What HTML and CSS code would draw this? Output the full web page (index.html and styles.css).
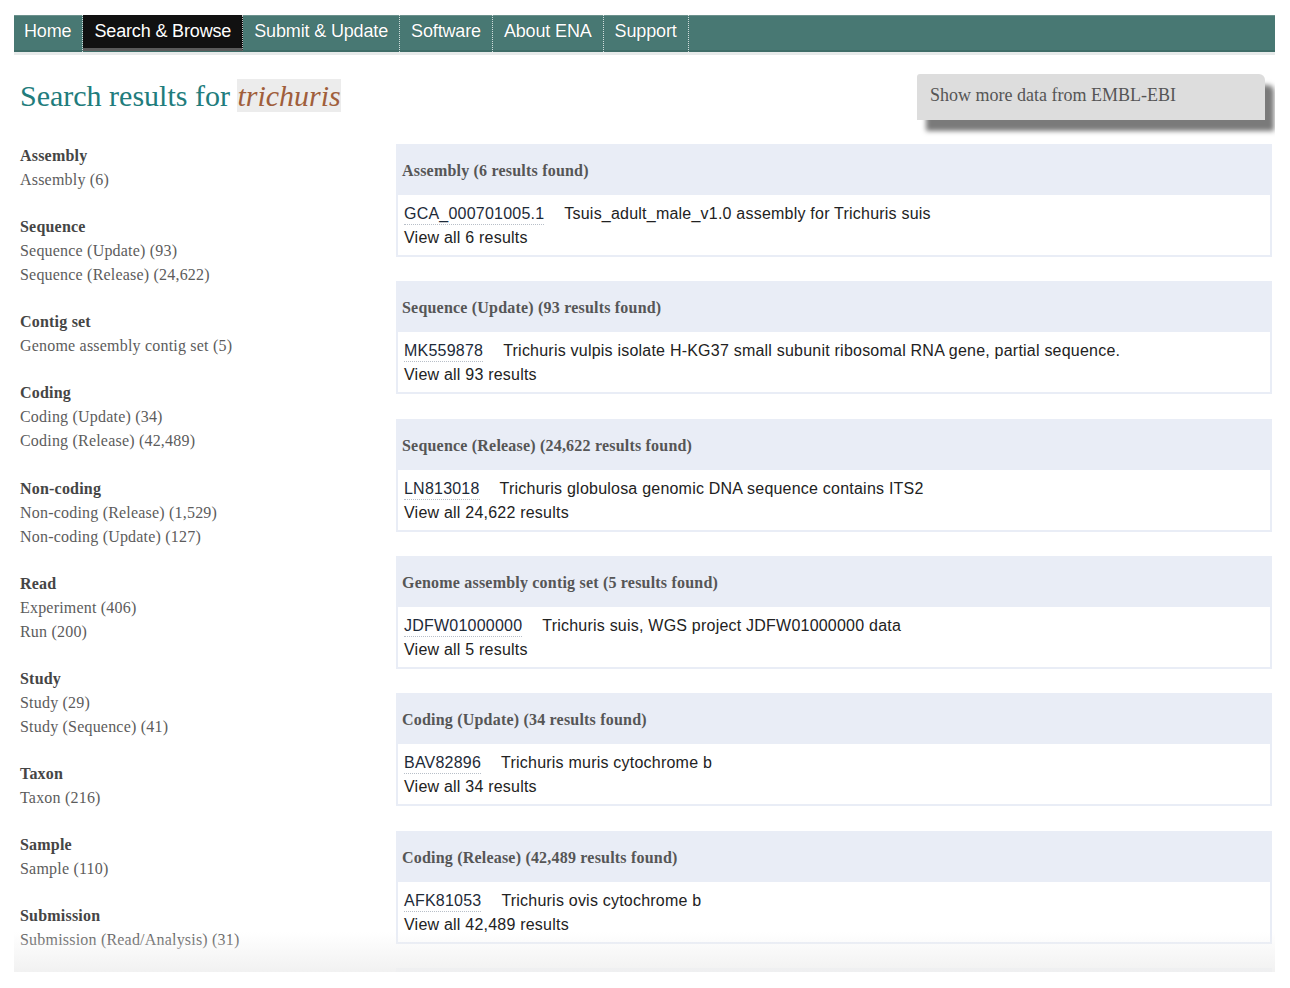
FILE: index.html
```html
<!DOCTYPE html>
<html lang="en">
<head>
<meta charset="utf-8">
<title>ENA - Search results for trichuris</title>
<link rel="stylesheet" href="styles.css">
</head>
<body>
<div class="page">
  <nav class="nav">
    <a class="nav-item first">Home</a>
    <a class="nav-item active">Search &amp; Browse</a>
    <a class="nav-item">Submit &amp; Update</a>
    <a class="nav-item">Software</a>
    <a class="nav-item">About ENA</a>
    <a class="nav-item">Support</a>
  </nav>

  <div class="head">
    <h1 class="title">Search results for <span class="term">trichuris</span></h1>
    <div class="more-btn">Show more data from EMBL-EBI</div>
  </div>

  <div class="content">
    <aside class="sidebar">
      <div class="group">
        <div class="group-title">Assembly</div>
        <div class="group-item">Assembly (6)</div>
      </div>
      <div class="group">
        <div class="group-title">Sequence</div>
        <div class="group-item">Sequence (Update) (93)</div>
        <div class="group-item">Sequence (Release) (24,622)</div>
      </div>
      <div class="group">
        <div class="group-title">Contig set</div>
        <div class="group-item">Genome assembly contig set (5)</div>
      </div>
      <div class="group">
        <div class="group-title">Coding</div>
        <div class="group-item">Coding (Update) (34)</div>
        <div class="group-item">Coding (Release) (42,489)</div>
      </div>
      <div class="group">
        <div class="group-title">Non-coding</div>
        <div class="group-item">Non-coding (Release) (1,529)</div>
        <div class="group-item">Non-coding (Update) (127)</div>
      </div>
      <div class="group">
        <div class="group-title">Read</div>
        <div class="group-item">Experiment (406)</div>
        <div class="group-item">Run (200)</div>
      </div>
      <div class="group">
        <div class="group-title">Study</div>
        <div class="group-item">Study (29)</div>
        <div class="group-item">Study (Sequence) (41)</div>
      </div>
      <div class="group">
        <div class="group-title">Taxon</div>
        <div class="group-item">Taxon (216)</div>
      </div>
      <div class="group">
        <div class="group-title">Sample</div>
        <div class="group-item">Sample (110)</div>
      </div>
      <div class="group">
        <div class="group-title">Submission</div>
        <div class="group-item">Submission (Read/Analysis) (31)</div>
      </div>
    </aside>

    <main class="results">
      <section class="panel">
        <div class="panel-head">Assembly (6 results found)</div>
        <div class="panel-body">
          <div><span class="acc">GCA_000701005.1</span>Tsuis_adult_male_v1.0 assembly for Trichuris suis</div>
          <div>View all 6 results</div>
        </div>
      </section>
      <section class="panel">
        <div class="panel-head">Sequence (Update) (93 results found)</div>
        <div class="panel-body">
          <div><span class="acc">MK559878</span>Trichuris vulpis isolate H-KG37 small subunit ribosomal RNA gene, partial sequence.</div>
          <div>View all 93 results</div>
        </div>
      </section>
      <section class="panel">
        <div class="panel-head">Sequence (Release) (24,622 results found)</div>
        <div class="panel-body">
          <div><span class="acc">LN813018</span>Trichuris globulosa genomic DNA sequence contains ITS2</div>
          <div>View all 24,622 results</div>
        </div>
      </section>
      <section class="panel">
        <div class="panel-head">Genome assembly contig set (5 results found)</div>
        <div class="panel-body">
          <div><span class="acc">JDFW01000000</span>Trichuris suis, WGS project JDFW01000000 data</div>
          <div>View all 5 results</div>
        </div>
      </section>
      <section class="panel">
        <div class="panel-head">Coding (Update) (34 results found)</div>
        <div class="panel-body">
          <div><span class="acc">BAV82896</span>Trichuris muris cytochrome b</div>
          <div>View all 34 results</div>
        </div>
      </section>
      <section class="panel">
        <div class="panel-head">Coding (Release) (42,489 results found)</div>
        <div class="panel-body">
          <div><span class="acc">AFK81053</span>Trichuris ovis cytochrome b</div>
          <div>View all 42,489 results</div>
        </div>
      </section>
      <section class="panel">
        <div class="panel-head"></div>
      </section>
    </main>
  </div>
</div>
</body>
</html>
```
FILE: styles.css
```css
html, body {
  margin: 0;
  padding: 0;
  background: #ffffff;
}

.page {
  position: relative;
  margin: 15px 15px 0 14px;
  width: 1261px;
  height: 957px;
  overflow: hidden;
}

.page::after {
  content: "";
  position: absolute;
  left: 0;
  right: 0;
  bottom: 0;
  height: 40px;
  background: linear-gradient(to bottom, rgba(242, 242, 242, 0), rgba(240, 240, 240, 0.9));
  pointer-events: none;
}

/* navigation */
.nav {
  display: flex;
  height: 37px;
  background: #487873;
  border-bottom: 3px solid #e7eaea;
  box-shadow: inset 0 -2px 0 #3f6d68, inset 0 1px 0 #6c918d;
  font-family: "Liberation Sans", Arial, sans-serif;
  font-size: 18px;
  letter-spacing: -0.15px;
}

.nav-item {
  display: block;
  padding: 0 11px;
  line-height: 33px;
  color: #ffffff;
  border-right: 1px dotted rgba(255, 255, 255, 0.75);
  white-space: nowrap;
  text-shadow: 0 0 1px rgba(0, 0, 0, 0.35);
}

.nav-item.first {
  padding-left: 10px;
}

.nav-item.active {
  background: #111111;
  height: 33px;
  border-bottom: 3px solid #5a5a5a;
}

/* header */
.head {
  display: flex;
  justify-content: space-between;
  align-items: flex-start;
  height: 89px;
  box-sizing: border-box;
  padding: 19px 10px 0 6px;
}

.title {
  margin: 5px 0 0 0;
  font-family: "Liberation Serif", "Times New Roman", serif;
  font-weight: normal;
  font-size: 30px;
  line-height: 34px;
  color: #217c7c;
}

.term {
  font-style: italic;
  color: #a05e3b;
  background: #ececec;
}

.more-btn {
  width: 348px;
  height: 46px;
  box-sizing: border-box;
  padding: 10px 13px 0;
  background: #dddddd;
  border-radius: 3px 6px 0 0;
  box-shadow: 9px 11px 5px #7a7a7a;
  font-family: "Liberation Serif", "Times New Roman", serif;
  font-size: 18px;
  line-height: 22px;
  color: #555555;
}

/* content */
.content {
  display: flex;
  align-items: flex-start;
}

.sidebar {
  width: 376px;
  padding-left: 6px;
  font-family: "Liberation Serif", "Times New Roman", serif;
  font-size: 16px;
  line-height: 24px;
  letter-spacing: 0.2px;
}

.group {
  margin-bottom: 23.15px;
}

.group-title {
  font-weight: bold;
  color: #454545;
}

.group-item {
  color: #5c5c5c;
}

.results {
  width: 876px;
}

.panel {
  margin-bottom: 24.33px;
}

.panel-head {
  height: 51px;
  box-sizing: border-box;
  padding: 16px 6px 0;
  background: #e9edf6;
  font-family: "Liberation Serif", "Times New Roman", serif;
  font-weight: bold;
  font-size: 16px;
  line-height: 22px;
  letter-spacing: 0.2px;
  color: #565656;
}

.panel-body {
  height: 62px;
  box-sizing: border-box;
  padding: 7px 6px 0;
  border: 2px solid #e9edf6;
  border-top: 0;
  background: #ffffff;
  font-family: "Liberation Sans", Arial, sans-serif;
  font-size: 16px;
  line-height: 24px;
  letter-spacing: 0.22px;
  color: #222222;
}

.acc {
  display: inline-block;
  margin-right: 20px;
  line-height: 20px;
  color: #1d2a38;
  border-bottom: 1px dotted #b8bfc8;
}
```
